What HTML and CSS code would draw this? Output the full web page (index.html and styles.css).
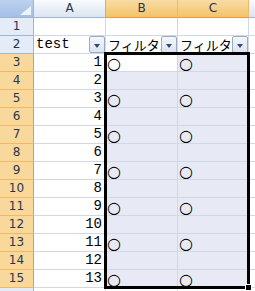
FILE: index.html
```html
<!DOCTYPE html>
<html lang="ja">
<head>
    <meta charset="UTF-8">
    <meta name="viewport" content="width=device-width, initial-scale=1.0">
    <title>フィルタ</title>
    <link rel="stylesheet" href="styles.css">
</head>
<body>

    <div class="sheet" id="sheet">
        <div class="corner"><span class="corner-mark"></span></div>
        <div class="col-head">A</div>
        <div class="col-head on">B</div>
        <div class="col-head on">C</div>
        <div class="col-head"></div>

        <div class="row-head">1</div>
        <div class="cell"></div>
        <div class="cell"></div>
        <div class="cell"></div>
        <div class="cell"></div>

        <div class="row-head">2</div>
        <div class="cell filter"><span class="label">test</span><span class="drop"></span></div>
        <div class="cell filter"><span class="label jp">フィルタ1</span><span class="drop"></span></div>
        <div class="cell filter"><span class="label jp">フィルタ2</span><span class="drop"></span></div>
        <div class="cell"></div>

        <div class="selection"><span class="handle"></span></div>
    </div>

    <script>
        const sheet = document.getElementById('sheet');
        const selection = sheet.querySelector('.selection');

        for (let r = 3; r <= 16; r++) {
            const inRange = r <= 15;
            const mark = inRange && r % 2 === 1 ? '○' : '';
            const num = inRange ? String(r - 2) : '';

            // row 16 only peeks in below the frame, its number is not visible
            const cells = [
                { cls: 'row-head' + (inRange ? ' on' : ''), text: inRange ? String(r) : '' },
                { cls: 'cell num', text: num },
                { cls: 'cell mark' + (inRange && r > 3 ? ' sel' : ''), text: mark },
                { cls: 'cell mark' + (inRange ? ' sel' : ''), text: mark },
                { cls: 'cell', text: '' }
            ];

            cells.forEach((c) => {
                const div = document.createElement('div');
                div.className = c.cls;
                div.textContent = c.text;
                sheet.insertBefore(div, selection);
            });
        }
    </script>

</body>
</html>
```

FILE: styles.css
```css
body {
    margin: 0;
    padding: 0;
    background-color: #fff;
    overflow: hidden;
    font-family: 'Liberation Mono', 'Noto Sans CJK JP', monospace;
}

.sheet {
    position: relative;
    display: grid;
    grid-template-columns: 34px 72px 72px 71px 40px;
    grid-auto-rows: 18px;
    width: 289px;
}

.sheet > div {
    box-sizing: border-box;
    border-right: 1px solid #d0d7e5;
    border-bottom: 1px solid #d0d7e5;
    overflow: hidden;
    white-space: nowrap;
}

.corner {
    position: relative;
    background: linear-gradient(#bdd2ee, #a3bfe6);
    border-right-color: #9eb6ce !important;
    border-bottom-color: #9eb6ce !important;
}

.corner-mark {
    position: absolute;
    right: 2px;
    bottom: 2px;
    width: 0;
    height: 0;
    border-left: 11px solid transparent;
    border-bottom: 9px solid #eef3fa;
}

.col-head {
    background: linear-gradient(#f9fbfd, #dbe4f0);
    border-right-color: #9eb6ce !important;
    border-bottom-color: #9eb6ce !important;
    color: #27364c;
    font-family: 'DejaVu Sans', sans-serif;
    font-size: 12px;
    line-height: 17px;
    text-align: center;
}

.col-head.on {
    background: linear-gradient(#f9dba4, #f2c46a);
    border-right-color: #f2b866 !important;
    border-bottom-color: #f29536 !important;
}

.row-head {
    background-color: #e4ecf7;
    border-right-color: #9eb6ce !important;
    border-bottom-color: #9eb6ce !important;
    color: #27364c;
    font-family: 'DejaVu Sans', sans-serif;
    font-size: 12px;
    line-height: 17px;
    text-align: center;
}

.row-head.on {
    background-color: #f9d89c;
    border-right-color: #f29536 !important;
    border-bottom-color: #f2b866 !important;
}

.cell {
    font-size: 14px;
    line-height: 17px;
    color: #000;
}

.cell.sel {
    background-color: #e7eaf4;
}

.cell.num {
    text-align: right;
    padding-right: 3px;
}

.cell.mark {
    font-family: 'DejaVu Sans', sans-serif;
    font-size: 16px;
    line-height: 19px;
    padding-left: 1px;
}

.filter {
    display: flex;
    align-items: stretch;
}

.label {
    flex: 1;
    overflow: hidden;
    padding-left: 2px;
}

.label.jp {
    font-family: 'Noto Sans CJK JP', sans-serif;
    font-size: 13px;
}

.drop {
    position: relative;
    flex: none;
    width: 14px;
    border: 1px solid #98acc8;
    border-radius: 2px;
    background: linear-gradient(#f4f7fb, #dce4ef);
}

.drop::after {
    content: '';
    position: absolute;
    left: 4px;
    top: 7px;
    border-left: 3px solid transparent;
    border-right: 3px solid transparent;
    border-top: 4px solid #2d4a80;
}

.selection {
    position: absolute;
    grid-column: 3 / 5;
    grid-row: 4 / 17;
    top: -2px;
    left: -2px;
    right: -1px;
    bottom: -1px;
    border: 3px solid #000 !important;
    overflow: visible !important;
    z-index: 2;
}

.handle {
    position: absolute;
    right: -5px;
    bottom: -5px;
    width: 5px;
    height: 5px;
    background-color: #000;
    border: 1px solid #fff;
}
```
